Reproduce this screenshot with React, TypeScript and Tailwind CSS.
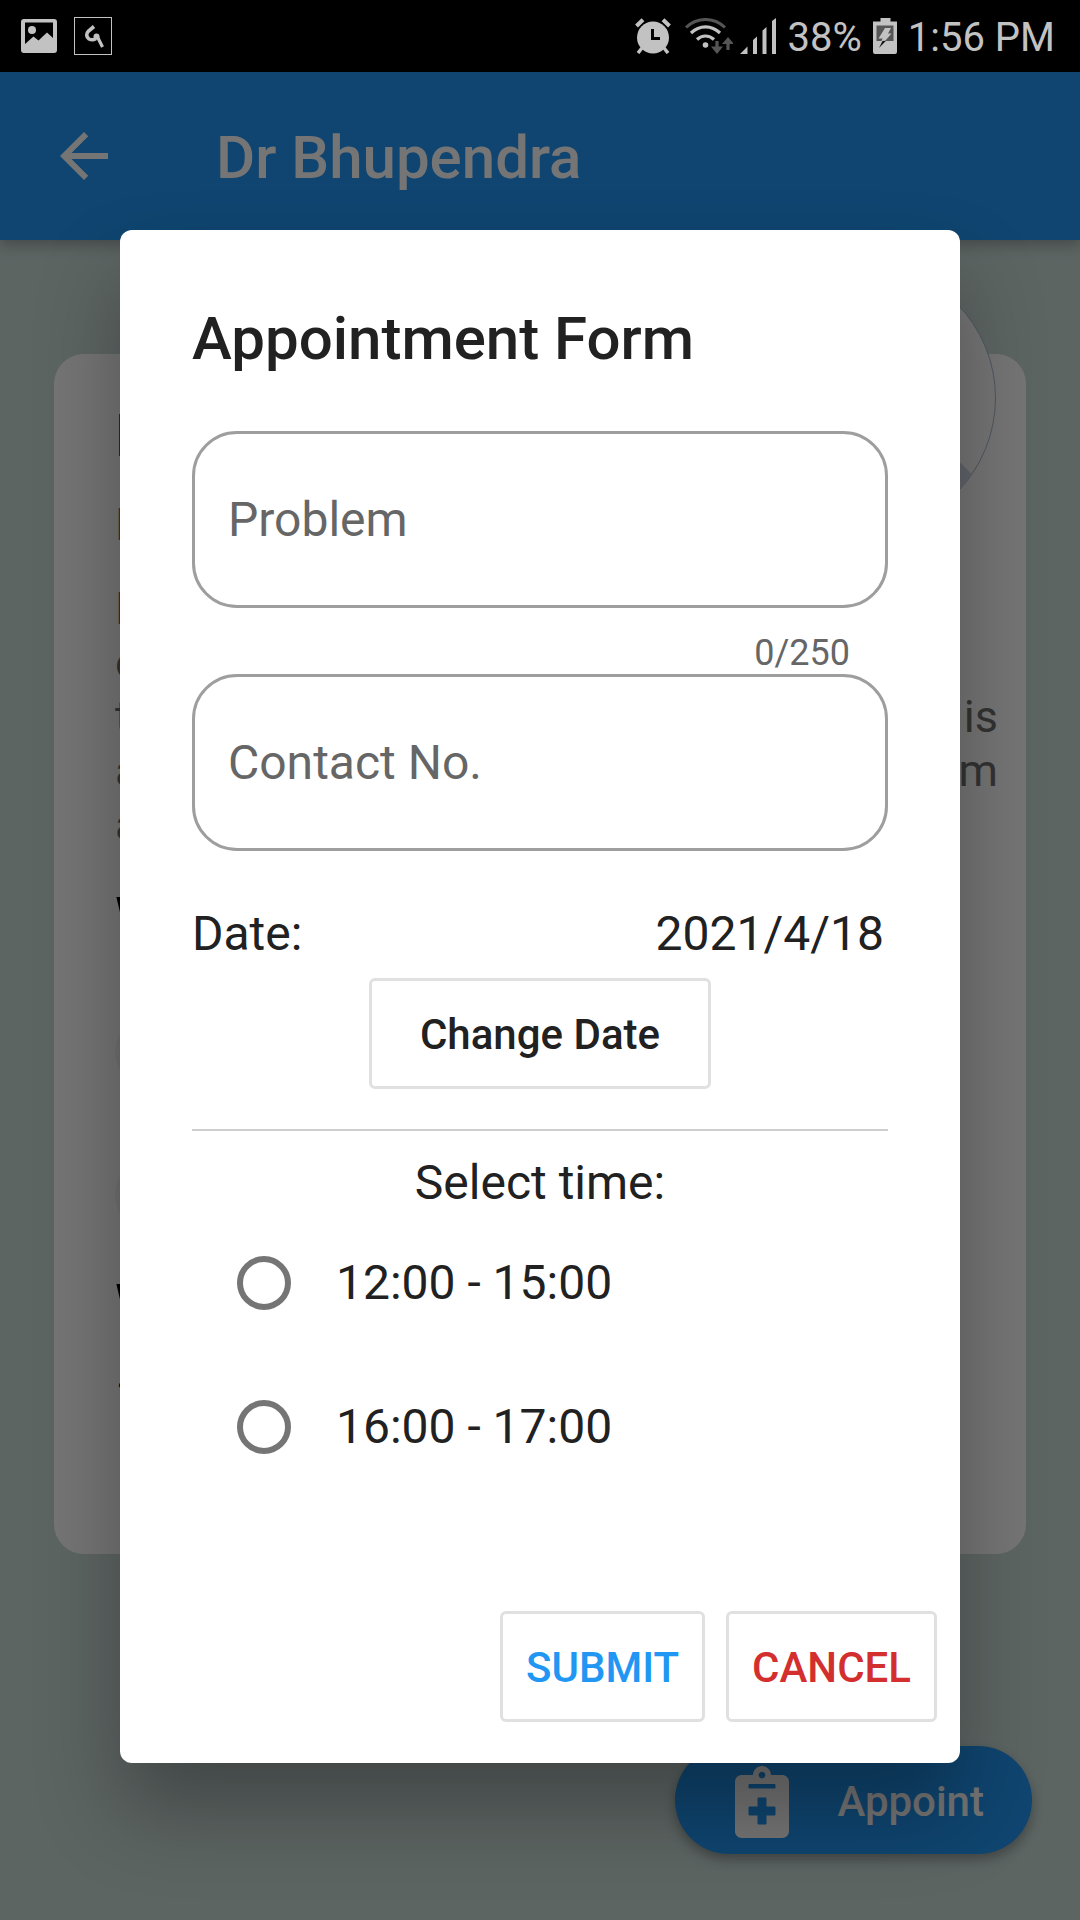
import { useState } from "react";
import { FaNotesMedical } from "react-icons/fa";
import { MdArrowBack } from "react-icons/md";

const slots = ["12:00 - 15:00", "16:00 - 17:00"];

const bioLines = [
  { start: "D", end: "" },
  { start: "o", end: "" },
  { start: "t", end: "is" },
  { start: "a", end: "m" },
  { start: "a", end: "" },
];

function PictureIcon() {
  return (
    <svg viewBox="0 0 36 34" className="h-[34px] w-9" aria-hidden="true">
      <path
        fillRule="evenodd"
        fill="currentColor"
        d="M3 0h30a3 3 0 0 1 3 3v28a3 3 0 0 1-3 3H3a3 3 0 0 1-3-3V3a3 3 0 0 1 3-3zM4 3.500V25l8.500-7.500 5 4L26 13.500l6 5.500V3.500z"
      />
      <circle cx="11" cy="11" r="4" fill="currentColor" />
    </svg>
  );
}

function HookIcon() {
  return (
    <svg viewBox="0 0 38 38" className="size-[38px]" fill="none" stroke="currentColor" aria-hidden="true">
      <rect x="0.500" y="0.500" width="37" height="37" strokeWidth="1" />
      <path d="M20 9.500L14.500 14c-2.500 2.500-2.500 6 .500 8 2.500 1.200 5 .800 7-.500" strokeWidth="3.600" />
      <path d="M21.500 19.500l2.500 1.500L28.500 30" strokeWidth="3.200" />
      <circle cx="22.500" cy="19.500" r="3" fill="currentColor" stroke="none" />
    </svg>
  );
}

function AlarmIcon() {
  return (
    <svg viewBox="0 0 36 36" className="size-9" fill="none" stroke="currentColor" aria-hidden="true">
      <circle cx="18" cy="19.500" r="16" fill="currentColor" stroke="none" />
      <path d="M1.500 8L8 1.800M34.500 8L28 1.800" strokeWidth="4" />
      <path d="M7 30l-4 5M29 30l4 5" strokeWidth="3.500" />
      <path d="M17.500 11v9.500H25" stroke="#000" strokeWidth="3" />
    </svg>
  );
}

function WifiIcon() {
  return (
    <svg viewBox="0 0 48 36" className="h-9 w-12" fill="none" stroke="currentColor" aria-hidden="true">
      <path d="M1 9.500C12-1.200 29-1.200 40 9.500" stroke="#555" strokeWidth="3" />
      <path d="M6 15c8.500-8.300 20.500-8.300 29 0" strokeWidth="3.200" />
      <path d="M12 21.500c5-4.700 12-4.700 17 0" strokeWidth="3.200" />
      <circle cx="20.500" cy="27" r="2.800" fill="currentColor" stroke="none" />
      <path d="M32 23v8M43 32v-9" stroke="#555" strokeWidth="3.200" />
      <path d="M26 28.500h12L32 36zM37 26h12l-6-7z" fill="#555" stroke="none" />
    </svg>
  );
}

function SignalIcon() {
  return (
    <svg viewBox="0 0 36 36" className="size-9" fill="currentColor" aria-hidden="true">
      <path d="M0 36l7.500-7.500V36zM13 22l4-3.500V36h-4zM22.500 12.500l4-3.500v27h-4zM32 3l4-3v36h-4z" />
    </svg>
  );
}

function BatteryIcon() {
  return (
    <svg viewBox="0 0 24 36" className="h-9 w-6" aria-hidden="true">
      <path d="M7.500 0h10v3.500H24V34a2 2 0 0 1-2 2H2a2 2 0 0 1-2-2V3.500h7.500z" fill="currentColor" />
      <path d="M3.500 7.500h17V23h-17z" fill="#555" />
      <path d="M12 10h6l-3 5.500h3.500L6 30l3.500-9.500H5.500z" fill="currentColor" />
      <path d="M9.500 23l3.500-.300L6 30z" fill="#111" />
    </svg>
  );
}

function StatusBar() {
  return (
    <div className="flex h-[72px] items-center justify-between bg-black pr-[25px] pl-[21px] text-[#c2c2c2]">
      <div className="flex items-center gap-[17px]">
        <PictureIcon />
        <HookIcon />
      </div>
      <div className="flex items-center text-[40px] leading-[48px]">
        <AlarmIcon />
        <span className="ml-[14px]">
          <WifiIcon />
        </span>
        <span className="ml-[7px]">
          <SignalIcon />
        </span>
        <span className="ml-3 pt-1">38%</span>
        <span className="ml-[11px]">
          <BatteryIcon />
        </span>
        <span className="ml-[11px] pt-1">1:56 PM</span>
      </div>
    </div>
  );
}

function ProfileCard() {
  return (
    <section className="relative mx-[54px] mt-[114px] rounded-[30px] bg-white pt-[46px] pr-7 pb-[129px] pl-[61px]">
      <div className="absolute -top-[91px] right-[30px] size-[270px] overflow-hidden rounded-full border border-[#a9bdd2] bg-white">
        <svg viewBox="0 0 270 270" className="size-full" aria-hidden="true">
          <path d="M40 270c10-60 50-80 95-80s60-10 100 10l20 20v50z" fill="#d3dbe6" />
        </svg>
      </div>
      <h2 className="text-[60px] leading-[72px] font-medium text-black">D</h2>
      <p className="mt-[26px] text-[45px] leading-[54px] text-[#757575]">M</p>
      <div className="mt-[30px] text-[45px] leading-[54px] text-[#6f6f6f]">
        {bioLines.map((line, i) => (
          <p key={i} className="flex justify-between">
            <span>{line.start}</span>
            <span>{line.end}</span>
          </p>
        ))}
      </div>
      <h3 className="mt-[31px] text-[60px] leading-[72px] font-medium text-black">W</h3>
      <div className="mt-[57px] h-20 w-[240px] rounded-full bg-[#f5f5f5]" />
      <div className="mt-[63px] h-20 w-[240px] rounded-full bg-[#f5f5f5]" />
      <h3 className="mt-[35px] text-[60px] leading-[72px] font-medium text-black">W</h3>
      <p className="mt-[27px] text-[48px] leading-[56px] text-[#222]">1</p>
    </section>
  );
}

function OutlinedField({
  id,
  label,
  type,
  value,
  maxLength,
  onChange,
}: {
  id: string;
  label: string;
  type: string;
  value: string;
  maxLength?: number;
  onChange: (value: string) => void;
}) {
  return (
    <input
      id={id}
      type={type}
      aria-label={label}
      placeholder={label}
      value={value}
      maxLength={maxLength}
      onChange={(e) => onChange(e.target.value)}
      className="block h-[177px] w-full rounded-[45px] border-[3px] border-[#9e9e9e] bg-transparent px-[33px] text-[48px] leading-[56px] text-[#212121] outline-none placeholder:text-[#666]"
    />
  );
}

function AppointmentDialog() {
  const [problem, setProblem] = useState("");
  const [contact, setContact] = useState("");
  const [slot, setSlot] = useState("");

  return (
    <div
      role="dialog"
      aria-labelledby="dialog-title"
      className="mx-[120px] w-full rounded-xl bg-white pt-[73px] pb-[41px] text-[#212121] shadow-[0_48px_84px_rgba(0,0,0,0.3)]"
    >
      <form onSubmit={(e) => e.preventDefault()}>
        <div className="px-[72px] text-[48px] leading-[56px]">
          <h2 id="dialog-title" className="mb-14 text-[60px] leading-[72px] font-medium">
            Appointment Form
          </h2>
          <OutlinedField
            id="problem"
            label="Problem"
            type="text"
            value={problem}
            maxLength={250}
            onChange={setProblem}
          />
          <p className="mt-6 pr-[38px] text-right text-[36px] leading-[42px] text-[#666]">
            {problem.length}/250
          </p>
          <OutlinedField id="contact" label="Contact No." type="tel" value={contact} onChange={setContact} />
          <div className="mt-[55px] flex justify-between pr-1">
            <span>Date:</span>
            <span>2021/4/18</span>
          </div>
          <div className="mt-4 flex justify-center">
            <button
              type="button"
              className="h-[111px] rounded-md border-[3px] border-[#e0e0e0] px-12 pt-[3px] text-[42px] leading-[48px] font-medium"
            >
              Change Date
            </button>
          </div>
          <hr className="mt-10 border-t-2 border-[#cecece]" />
          <fieldset className="mt-6">
            <legend className="w-full text-center">Select time:</legend>
            {slots.map((s) => (
              <label key={s} className="flex h-[144px] items-center gap-[45px] pl-[45px]">
                <input
                  type="radio"
                  name="slot"
                  value={s}
                  checked={slot === s}
                  onChange={() => setSlot(s)}
                  className="size-[54px] shrink-0 appearance-none rounded-full border-[6px] border-[#757575] checked:border-[16px] checked:border-[#2196f3]"
                />
                <span>{s}</span>
              </label>
            ))}
          </fieldset>
        </div>
        <div className="mt-[112px] flex justify-end gap-[21px] pr-[23px] text-[42px] leading-[48px] font-medium">
          <button
            type="submit"
            className="h-[111px] rounded-md border-[3px] border-[#e0e0e0] px-[23px] pt-[3px] text-[#2196f3]"
          >
            SUBMIT
          </button>
          <button
            type="button"
            className="h-[111px] rounded-md border-[3px] border-[#e0e0e0] px-[23px] pt-[3px] text-[#d32f2f]"
          >
            CANCEL
          </button>
        </div>
      </form>
    </div>
  );
}

export default function App() {
  return (
    <div className="relative flex min-h-screen flex-col overflow-hidden bg-[#cadcd8] font-['Roboto',sans-serif]">
      <StatusBar />
      <div className="relative flex flex-1 flex-col">
        <header className="relative flex h-[168px] items-center gap-24 bg-[#2196f3] px-12 text-white shadow-[0_6px_12px_rgba(0,0,0,0.25)]">
          <button type="button" aria-label="Back">
            <MdArrowBack className="size-[72px]" />
          </button>
          <h1 className="pt-1 text-[60px] leading-[72px] font-medium">Dr Bhupendra</h1>
        </header>
        <main>
          <ProfileCard />
        </main>
        <button
          type="button"
          className="absolute right-12 bottom-[66px] flex h-[108px] items-center gap-12 rounded-full bg-[#2196f3] pt-[3px] pr-12 pl-[60px] text-[42px] leading-[48px] font-medium text-white shadow-[0_6px_12px_rgba(0,0,0,0.3)]"
        >
          <FaNotesMedical className="h-[72px] w-[54px]" />
          Appoint
        </button>
        <div className="absolute inset-0 flex items-center justify-center overflow-hidden bg-black/54">
          <AppointmentDialog />
        </div>
      </div>
    </div>
  );
}
